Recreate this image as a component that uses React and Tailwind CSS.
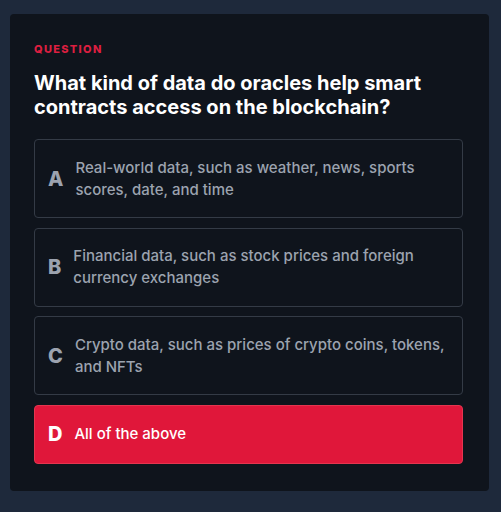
const options = [
  { key: 'A', text: 'Real-world data, such as weather, news, sports scores, date, and time' },
  { key: 'B', text: 'Financial data, such as stock prices and foreign currency exchanges' },
  { key: 'C', text: 'Crypto data, such as prices of crypto coins, tokens, and NFTs' },
  { key: 'D', text: 'All of the above', selected: true },
]

export default function App() {
  return (
    <div className="min-h-[512px] w-[501px] bg-[#1e293b] pt-[14px] pl-[10px] font-['Inter',sans-serif]">
      <div className="w-[479px] rounded bg-[#0f141c] pt-[27px] pb-[27px] pl-6 pr-[26px]">
        <div className="text-[11px] font-extrabold uppercase tracking-[0.12em] leading-4 text-[#dc1f40]">Question</div>
        <h1 className="mt-[14px] text-[20px] font-bold leading-6 text-white">
          What kind of data do oracles help smart contracts access on the blockchain?
        </h1>
        <div className="mt-[20px] flex flex-col gap-[9.5px]">
          {options.map(o => (
            <div
              key={o.key}
              className={
                o.selected
                  ? 'flex items-center gap-3 rounded border border-[#e5354f] bg-[#e0173a] py-[16.5px] pl-[13px] pr-4'
                  : 'flex items-center gap-3 rounded border border-[#343b46] py-[16.5px] pl-[13px] pr-4'
              }
            >
              <span className={o.selected ? 'text-[20px] font-extrabold leading-6 text-white' : 'text-[20px] font-extrabold leading-6 text-[#9ca3af]'}>
                {o.key}
              </span>
              <span className={o.selected ? 'text-[15px] font-medium leading-[22px] text-white' : 'text-[15px] font-medium leading-[22px] text-[#9ca3af]'}>
                {o.text}
              </span>
            </div>
          ))}
        </div>
      </div>
    </div>
  )
}
